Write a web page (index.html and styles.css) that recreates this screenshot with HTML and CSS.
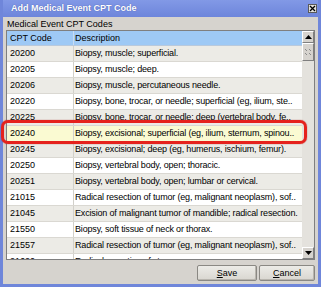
FILE: index.html
```html
<!DOCTYPE html>
<html lang="en">
<head>
  <meta charset="UTF-8">
  <title>Add Medical Event CPT Code</title>
  <link rel="stylesheet" href="styles.css">
</head>
<body>
  <div class="window">
    <div class="titlebar">
      <span class="title">Add Medical Event CPT Code</span>
      <span class="close">
        <svg width="7" height="7" viewBox="0 0 7 7"><path d="M1 1L6 6M6 1L1 6" stroke="#000" stroke-width="1.3"/></svg>
      </span>
    </div>
    <div class="content">
      <div class="caption">Medical Event CPT Codes</div>
      <div class="table">
        <div class="list">
          <div class="row head"><div class="code">CPT Code</div><div class="desc">Description</div></div>
          <div class="row"><div class="code">20200</div><div class="desc">Biopsy, muscle; superficial.</div></div>
          <div class="row"><div class="code">20205</div><div class="desc">Biopsy, muscle; deep.</div></div>
          <div class="row"><div class="code">20206</div><div class="desc">Biopsy, muscle, percutaneous needle.</div></div>
          <div class="row"><div class="code">20220</div><div class="desc">Biopsy, bone, trocar, or needle; superficial (eg, ilium, ste..</div></div>
          <div class="row"><div class="code">20225</div><div class="desc">Biopsy, bone, trocar, or needle; deep (vertebral body, fe..</div></div>
          <div class="row sel"><div class="code">20240</div><div class="desc">Biopsy, excisional; superficial (eg, ilium, sternum, spinou..</div></div>
          <div class="row"><div class="code">20245</div><div class="desc">Biopsy, excisional; deep (eg, humerus, ischium, femur).</div></div>
          <div class="row"><div class="code">20250</div><div class="desc">Biopsy, vertebral body, open; thoracic.</div></div>
          <div class="row"><div class="code">20251</div><div class="desc">Biopsy, vertebral body, open; lumbar or cervical.</div></div>
          <div class="row"><div class="code">21015</div><div class="desc">Radical resection of tumor (eg, malignant neoplasm), sof..</div></div>
          <div class="row"><div class="code">21045</div><div class="desc">Excision of malignant tumor of mandible; radical resection.</div></div>
          <div class="row"><div class="code">21550</div><div class="desc">Biopsy, soft tissue of neck or thorax.</div></div>
          <div class="row"><div class="code">21557</div><div class="desc">Radical resection of tumor (eg, malignant neoplasm), sof..</div></div>
          <div class="row"><div class="code">21620</div><div class="desc">Radical resection of sternum;</div></div>
        </div>
        <div class="scrollbar">
          <div class="sb-btn">
            <svg width="7" height="4" viewBox="0 0 7 4"><path d="M0 4L3.5 0L7 4Z" fill="#000"/></svg>
          </div>
          <div class="thumb">
            <svg width="6" height="6" viewBox="0 0 6 6" fill="#8a8a8a"><rect x="0" y="0" width="1" height="1"/><rect x="4" y="0" width="1" height="1"/><rect x="1" y="1" width="1" height="1"/><rect x="5" y="1" width="1" height="1"/><rect x="0" y="4" width="1" height="1"/><rect x="4" y="4" width="1" height="1"/><rect x="1" y="5" width="1" height="1"/><rect x="5" y="5" width="1" height="1"/></svg>
          </div>
          <div class="track"></div>
          <div class="sb-btn">
            <svg width="7" height="4" viewBox="0 0 7 4"><path d="M0 0L3.5 4L7 0Z" fill="#000"/></svg>
          </div>
        </div>
      </div>
      <div class="buttons">
        <button class="btn save" type="button"><u>S</u>ave</button>
        <button class="btn cancel" type="button"><u>C</u>ancel</button>
      </div>
    </div>
    <div class="highlight"></div>
  </div>
</body>
</html>
```

FILE: styles.css
```css
body {
  margin: 0;
  font-family: "Liberation Sans", Arial, sans-serif;
  font-size: 9px;
  color: #000;
}
.window {
  position: relative;
  width: 321px;
  height: 287px;
  box-sizing: border-box;
  background: #d6d3ce;
  border: 3px solid #6f86da;
  border-top: 0;
  display: flex;
  flex-direction: column;
}
.titlebar {
  height: 17px;
  flex: none;
  background: linear-gradient(#8299e6, #6d85db);
  display: flex;
  align-items: center;
  justify-content: space-between;
  padding: 0 1px 1px 8px;
  box-sizing: border-box;
}
.title {
  color: #fff;
  font-weight: bold;
  font-size: 9px;
  text-shadow: 0 0 1px #3a4fa0;
}
.close {
  width: 9px;
  height: 9px;
  box-sizing: border-box;
  background: #e4e2dc;
  border: 1px solid #5a5a5a;
  display: flex;
  align-items: center;
  justify-content: center;
}
.close svg {
  display: block;
}
.content {
  flex: 1;
  display: flex;
  flex-direction: column;
  padding: 2px 3px 0 3px;
}
.caption {
  height: 11px;
  line-height: 11px;
  padding-left: 1px;
}
.table {
  height: 230px;
  box-sizing: border-box;
  border: 1px solid #7f7f7f;
  display: flex;
}
.list {
  flex: 1;
  overflow: hidden;
  background: #fff;
}
.row {
  display: flex;
  height: 16px;
  line-height: 15px;
  box-sizing: border-box;
  border-bottom: 1px solid #dad8d2;
  white-space: nowrap;
}
.row:nth-child(even) {
  background: #ecebe6;
}
.row.head {
  height: 15px;
  line-height: 14px;
  background: #9ec9f5;
  border-bottom: 1px solid #b9c9dc;
}
.row.sel {
  background: #fafad2;
}
.code {
  width: 67px;
  flex: none;
  box-sizing: border-box;
  padding-left: 3px;
  border-right: 1px solid #d2d0ca;
}
.head .code {
  border-right-color: #c8dcf2;
}
.desc {
  padding-left: 1px;
  letter-spacing: -0.17px;
}
.head .desc {
  letter-spacing: 0;
}
.scrollbar {
  width: 12px;
  flex: none;
  display: flex;
  flex-direction: column;
  background: #e4e2dd;
}
.sb-btn, .thumb {
  height: 12px;
  box-sizing: border-box;
  background: #d6d3ce;
  border: 1px solid;
  border-color: #fff #7f7f7f #7f7f7f #fff;
  display: flex;
  align-items: center;
  justify-content: center;
}
.thumb {
  height: 18px;
}
.track {
  flex: 1;
}
.buttons {
  display: flex;
  justify-content: flex-end;
  gap: 2px;
  margin-top: 5px;
}
.btn {
  height: 16px;
  padding: 0;
  font: inherit;
  color: #000;
  background: linear-gradient(#ecebe7, #d9d6d0);
  border: 1px solid #8a8883;
  border-radius: 2px;
  box-shadow: inset -1px -1px 0 #b8b5ae;
}
.save {
  width: 60px;
}
.cancel {
  width: 56px;
}
.highlight {
  position: absolute;
  left: -2px;
  top: 120px;
  width: 306px;
  height: 24px;
  box-sizing: border-box;
  border: 3px solid #e5221d;
  border-radius: 7px;
  box-shadow: 0 0 1px #9a1010;
}
```
